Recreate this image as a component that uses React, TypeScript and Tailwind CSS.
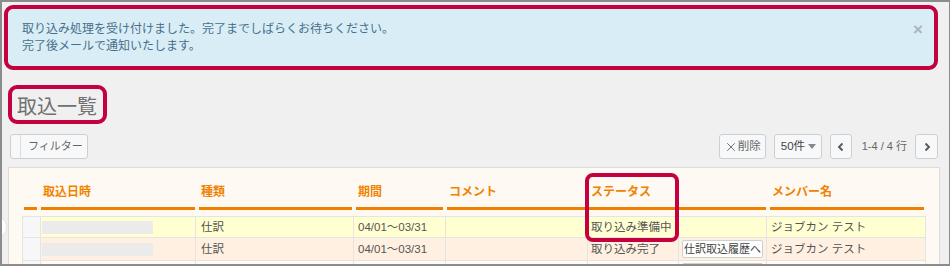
import React from "react";
import { X } from "lucide-react";

const headers = [
  { w: "w-[13px]", label: "" },
  { w: "w-[154px]", label: "取込日時" },
  { w: "w-[153px]", label: "種類" },
  { w: "w-[87px]", label: "期間" },
  { w: "w-[138px]", label: "コメント" },
  { w: "w-[177px]", label: "ステータス" },
  { w: "w-[154px]", label: "メンバー名" },
];

const rows = [
  { bg: "bg-[#ffffd2]", h: "h-[21px]", status: "取り込み準備中", filled: true, btn: "none" },
  { bg: "bg-[#fff0e1]", h: "h-[23px]", status: "取り込み完了", filled: true, btn: "text" },
  { bg: "bg-[#fffaf4]", h: "h-[23px]", status: "", filled: false, btn: "empty" },
];

function Chevron({ dir }: { dir: "left" | "right" }) {
  return (
    <svg width="8" height="10" viewBox="0 0 8 10" fill="none">
      <path
        d={dir === "left" ? "M5.5 1.5 L2 5 L5.5 8.5" : "M2.5 1.5 L6 5 L2.5 8.5"}
        stroke="#555"
        strokeWidth="1.8"
      />
    </svg>
  );
}

export default function App() {
  return (
    <div className="relative w-[950px] h-[266px] overflow-hidden bg-[#f0f0f0] border-t-2 border-l-2 border-r border-b-2 border-[#8c8c8c] font-['Liberation_Sans','Noto_Sans_CJK_JP',sans-serif] text-[12px] text-[#555]">
      {/* alert */}
      <div className="ml-[2px] mt-[3px] w-[934px] h-[65px] rounded-[9px] border-4 border-[#c4003f] bg-[#d9edf7] flex justify-between pl-[14px] pr-[11px] pt-[12px] text-[#46708a] leading-[17px]">
        <div>
          <p>取り込み処理を受け付けました。完了までしばらくお待ちください。</p>
          <p>完了後メールで通知いたします。</p>
        </div>
        <span className="text-[17px] font-bold text-[#a8b4bb] leading-[17px]">×</span>
      </div>

      {/* title */}
      <div className="ml-[6px] mt-[15px] w-[99px] h-[39px] rounded-[9px] border-4 border-[#c4003f] pl-[5px] pt-[3px] text-[20px] leading-[31px] text-[#707070]">
        取込一覧
      </div>

      {/* toolbar */}
      <div className="mt-[10px] ml-[8px] mr-[11px] h-[25px] flex items-center justify-between">
        <div className="flex h-[25px] w-[78px] rounded-[3px] border border-[#cfcfcf] bg-[#f7f8f9]">
          <div className="w-[10px] border-r border-[#dcdcdc]" />
          <div className="pl-[7px] text-[11px] leading-[23px] text-[#666]">フィルター</div>
        </div>
        <div className="flex items-center h-[25px]">
          <div className="flex items-center h-[25px] w-[47px] rounded-[3px] border border-[#cfcfcf] bg-[#f7f8f9] pl-[4px] text-[#666]">
            <X size={14} strokeWidth={1.4} color="#555" />
            <span className="text-[11.5px]">削除</span>
          </div>
          <div className="ml-[8px] flex items-center justify-between h-[25px] w-[48px] rounded-[3px] border border-[#cfcfcf] bg-[#f7f8f9] pl-[6px] pr-[5px] text-[11.5px] text-[#444]">
            <span>50件</span>
            <span className="w-0 h-0 border-l-[4px] border-r-[4px] border-t-[5px] border-l-transparent border-r-transparent border-t-[#888]" />
          </div>
          <div className="ml-[8px] flex items-center justify-center h-[25px] w-[22px] rounded-[3px] border border-[#cfcfcf] bg-[#f7f8f9]">
            <Chevron dir="left" />
          </div>
          <span className="ml-[10px] whitespace-nowrap text-[11px] text-[#666]">1-4 / 4 行</span>
          <div className="ml-[8px] flex items-center justify-center h-[25px] w-[23px] rounded-[3px] border border-[#cfcfcf] bg-[#f7f8f9]">
            <Chevron dir="right" />
          </div>
        </div>
      </div>

      {/* panel */}
      <div className="mt-[8px] ml-[6px] mr-[9px] h-[120px] border border-[#dcdcdc] bg-[#fff9f3]">
        <div className="flex gap-[4px] pl-[15px] pt-[16px]">
          {headers.map((h, i) => (
            <div
              key={i}
              className={`${h.w} pl-[2px] pb-[6px] border-b-[3px] border-[#f07f00] text-[#f08200] font-bold leading-[17px] h-[26px]`}
            >
              {h.label}
            </div>
          ))}
        </div>
        <table className="ml-[13px] mt-[6px] table-fixed border-collapse w-[903px] text-[11.5px]">
          <colgroup>
            <col className="w-[18px]" />
            <col className="w-[155px]" />
            <col className="w-[158px]" />
            <col className="w-[92px]" />
            <col className="w-[142px]" />
            <col className="w-[91px]" />
            <col className="w-[88px]" />
            <col className="w-[159px]" />
          </colgroup>
          <tbody>
            {rows.map((r, i) => (
              <tr key={i} className={`${r.bg} ${r.h}`}>
                <td className="border border-[#e4e4e4] bg-[#f7f7f7]" />
                <td className="border border-[#e4e4e4] pl-[1px]">
                  {r.filled && <div className="w-[111px] h-[13px] bg-[#ebebeb]" />}
                </td>
                <td className="border border-[#e4e4e4] px-[5px] leading-[17px]">{r.filled ? "仕訳" : ""}</td>
                <td className="border border-[#e4e4e4] px-[4px] leading-[17px]">{r.filled ? "04/01〜03/31" : ""}</td>
                <td className="border border-[#e4e4e4]" />
                <td className="border border-[#e4e4e4] px-[3px] leading-[17px] whitespace-nowrap">{r.status}</td>
                <td className="border border-[#e4e4e4] px-[3px] align-top pt-[2px]">
                  {r.btn === "text" && (
                    <div className="w-[81px] h-[18px] rounded-[2px] border border-[#cfcfcf] bg-white text-center text-[11px] leading-[16px] text-[#444]">
                      仕訳取込履歴へ
                    </div>
                  )}
                  {r.btn === "empty" && (
                    <div className="w-[81px] h-[18px] rounded-[2px] border border-[#cfcfcf] bg-white" />
                  )}
                </td>
                <td className="border border-[#e4e4e4] px-[4px] leading-[17px]">{r.filled ? "ジョブカン テスト" : ""}</td>
              </tr>
            ))}
          </tbody>
        </table>
      </div>

      {/* highlight around status column */}
      <div className="absolute left-[583px] top-[171px] w-[94px] h-[69px] rounded-[8px] border-4 border-[#c4003f]" />

      {/* floating side handle */}
      <div className="absolute left-[-19px] top-[213px] w-[24px] h-[24px] rounded-full bg-white border border-[#e4e4e4]" />
    </div>
  );
}
